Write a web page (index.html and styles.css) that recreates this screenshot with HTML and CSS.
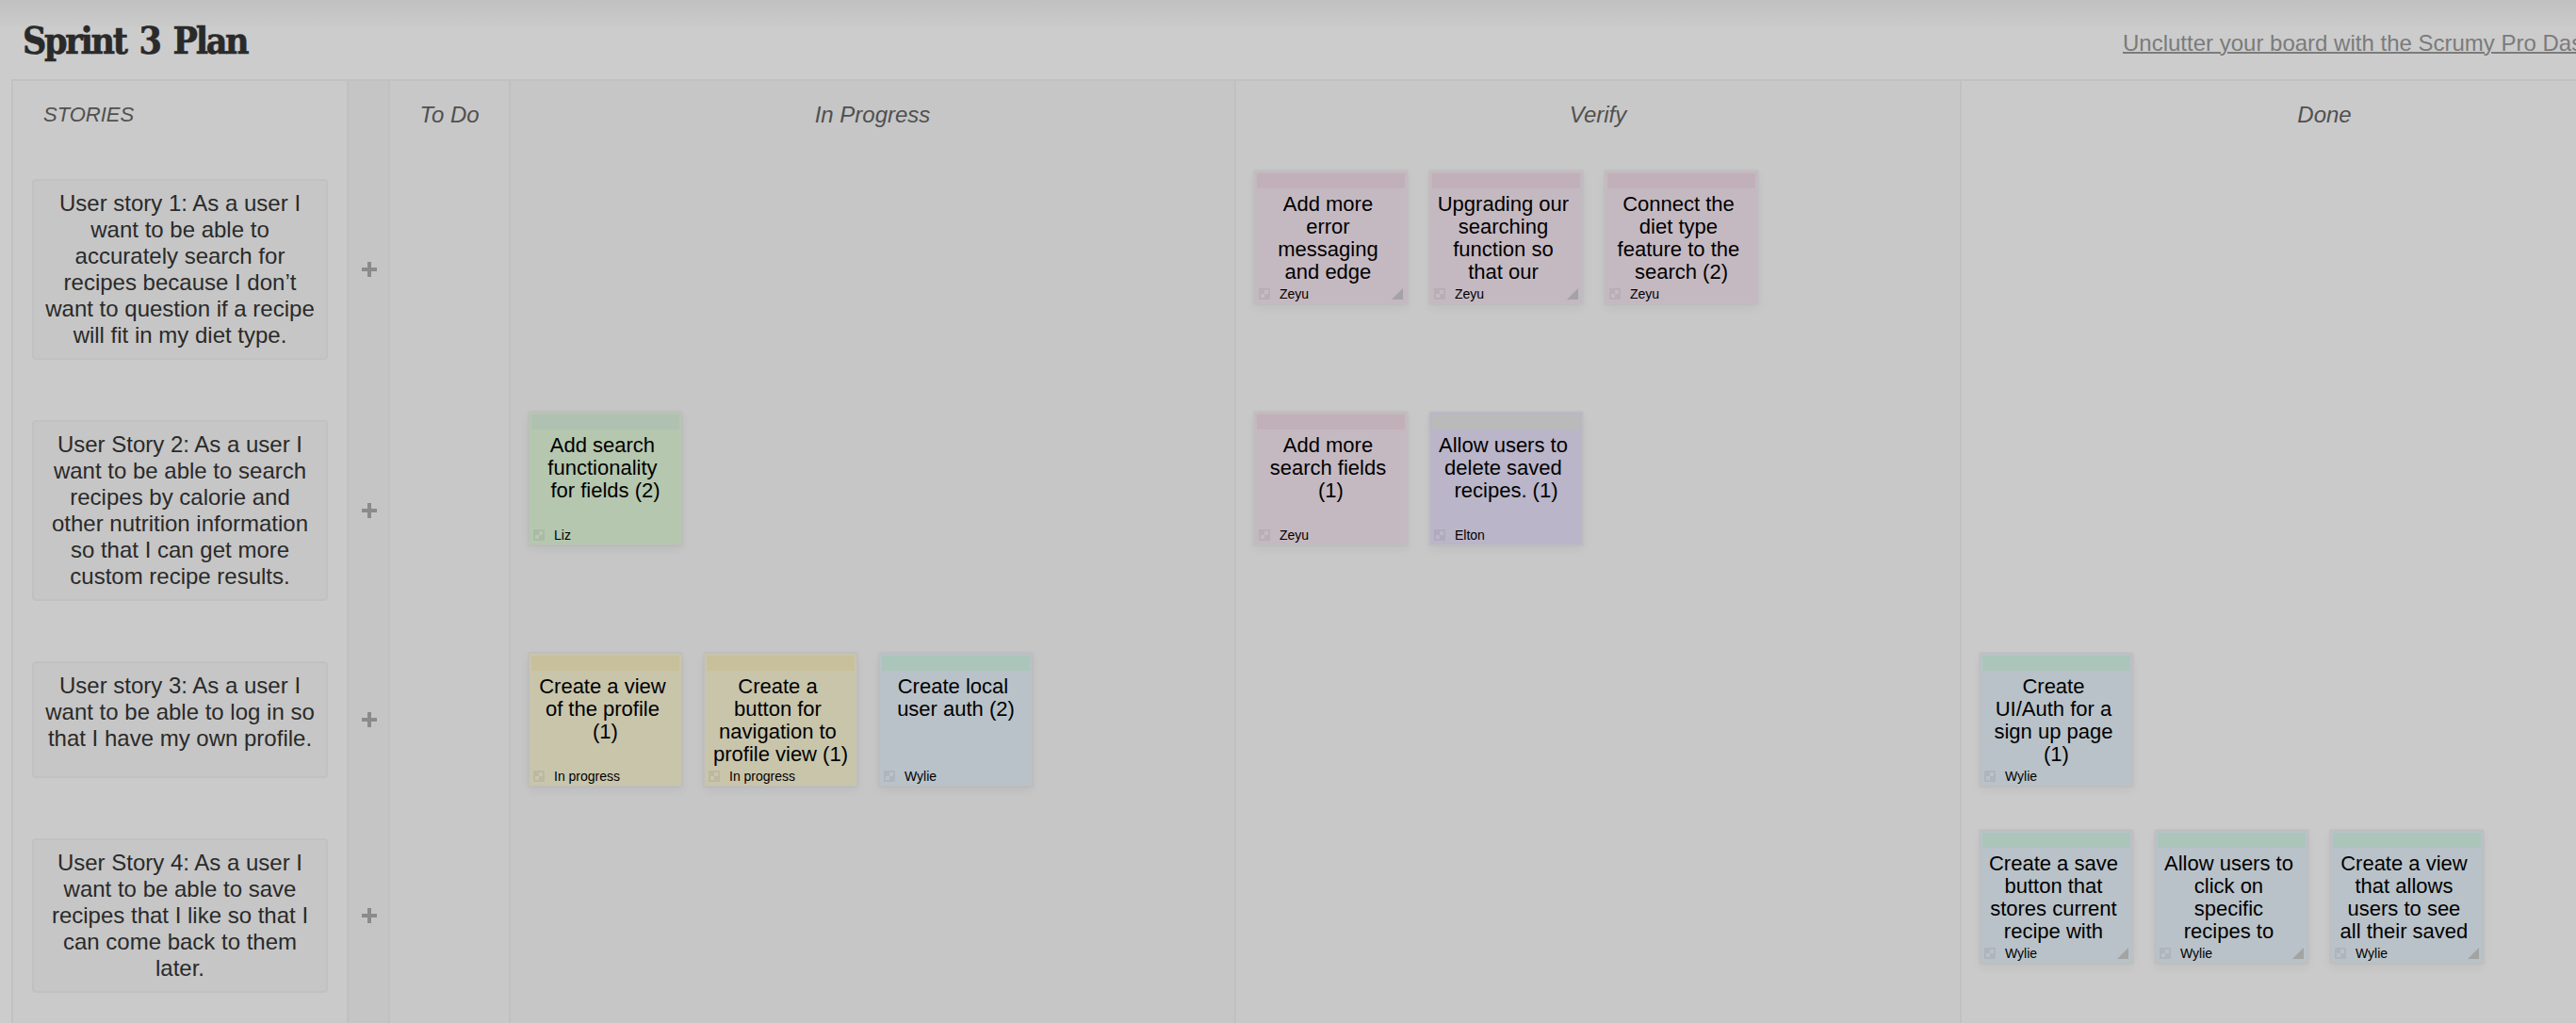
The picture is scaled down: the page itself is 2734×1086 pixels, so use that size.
FILE: index.html
```html
<!DOCTYPE html>
<html lang="en">
<head>
<meta charset="utf-8">
<title>Sprint 3 Plan</title>
<link rel="stylesheet" href="styles.css">
</head>
<body>
<svg class="defs" width="0" height="0">
  <symbol id="mark" viewBox="0 0 12 12"><path class="mark-bg" d="M0 0h12v12H0z"/><path class="mark-fg" d="M6 2h4v4H6zM2 6h4v4H2z"/></symbol>
  <symbol id="plus" viewBox="0 0 16 16"><path d="M6 0h4v6h6v4h-6v6H6v-6H0V6h6z"/></symbol>
  <symbol id="more" viewBox="0 0 12 12"><path d="M12 0v12H0z"/></symbol>
</svg>
<header class="top">
  <h1 class="title">Sprint 3 Plan</h1>
  <a class="promo">Unclutter your board with the Scrumy Pro Dashboard</a>
</header>
<main class="board">
  <section class="col stories">
    <h2 class="head">STORIES</h2>
    <div class="row tall"><p class="story">User story 1: As a user I<br>want to be able to<br>accurately search for<br>recipes because I don’t<br>want to question if a recipe<br>will fit in my diet type.</p></div>
    <div class="row tall"><p class="story">User Story 2: As a user I<br>want to be able to search<br>recipes by calorie and<br>other nutrition information<br>so that I can get more<br>custom recipe results.</p></div>
    <div class="row"><p class="story">User story 3: As a user I<br>want to be able to log in so<br>that I have my own profile.</p></div>
    <div class="row mid"><p class="story">User Story 4: As a user I<br>want to be able to save<br>recipes that I like so that I<br>can come back to them<br>later.</p></div>
  </section>
  <section class="col adders">
    <div class="head"></div>
    <div class="row tall"><svg class="plus"><use href="#plus"/></svg></div>
    <div class="row tall"><svg class="plus"><use href="#plus"/></svg></div>
    <div class="row"><svg class="plus"><use href="#plus"/></svg></div>
    <div class="row mid"><svg class="plus"><use href="#plus"/></svg></div>
  </section>
  <section class="col todo"><h2 class="head">To Do</h2></section>
  <section class="col lane">
    <h2 class="head">In Progress</h2>
    <div class="row tall"></div>
    <div class="row tall">
      <article class="card green"><div class="bar"></div><div class="text">Add search 
functionality 
for fields (2)</div><footer><svg class="mark"><use href="#mark"/></svg><span>Liz</span></footer></article>
    </div>
    <div class="row">
      <article class="card yellow"><div class="bar"></div><div class="text">Create a view 
of the profile 
(1)</div><footer><svg class="mark"><use href="#mark"/></svg><span>In progress</span></footer></article>
      <article class="card yellow"><div class="bar"></div><div class="text">Create a 
button for 
navigation to 
profile view (1)</div><footer><svg class="mark"><use href="#mark"/></svg><span>In progress</span></footer></article>
      <article class="card blue"><div class="bar"></div><div class="text">Create local 
user auth (2)</div><footer><svg class="mark"><use href="#mark"/></svg><span>Wylie</span></footer></article>
    </div>
  </section>
  <section class="col lane verify">
    <h2 class="head">Verify</h2>
    <div class="row tall">
      <article class="card pink"><div class="bar"></div><div class="text">Add more 
error 
messaging 
and edge </div><footer><svg class="mark"><use href="#mark"/></svg><span>Zeyu</span><svg class="more"><use href="#more"/></svg></footer></article>
      <article class="card pink"><div class="bar"></div><div class="text">Upgrading our 
searching 
function so 
that our </div><footer><svg class="mark"><use href="#mark"/></svg><span>Zeyu</span><svg class="more"><use href="#more"/></svg></footer></article>
      <article class="card pink"><div class="bar"></div><div class="text">Connect the 
diet type 
feature to the 
search (2)</div><footer><svg class="mark"><use href="#mark"/></svg><span>Zeyu</span></footer></article>
    </div>
    <div class="row tall">
      <article class="card pink"><div class="bar"></div><div class="text">Add more 
search fields 
(1)</div><footer><svg class="mark"><use href="#mark"/></svg><span>Zeyu</span></footer></article>
      <article class="card purple"><div class="bar"></div><div class="text">Allow users to 
delete saved 
recipes. (1)</div><footer><svg class="mark"><use href="#mark"/></svg><span>Elton</span></footer></article>
    </div>
  </section>
  <section class="col lane done">
    <h2 class="head">Done</h2>
    <div class="row tall"></div>
    <div class="row tall"></div>
    <div class="row">
      <article class="card blue"><div class="bar"></div><div class="text">Create 
UI/Auth for a 
sign up page 
(1)</div><footer><svg class="mark"><use href="#mark"/></svg><span>Wylie</span></footer></article>
    </div>
    <div class="row mid">
      <article class="card blue"><div class="bar"></div><div class="text">Create a save 
button that 
stores current 
recipe with </div><footer><svg class="mark"><use href="#mark"/></svg><span>Wylie</span><svg class="more"><use href="#more"/></svg></footer></article>
      <article class="card blue"><div class="bar"></div><div class="text">Allow users to 
click on 
specific 
recipes to </div><footer><svg class="mark"><use href="#mark"/></svg><span>Wylie</span><svg class="more"><use href="#more"/></svg></footer></article>
      <article class="card blue"><div class="bar"></div><div class="text">Create a view 
that allows 
users to see 
all their saved </div><footer><svg class="mark"><use href="#mark"/></svg><span>Wylie</span><svg class="more"><use href="#more"/></svg></footer></article>
    </div>
  </section>
</main>
</body>
</html>
```
FILE: styles.css
```css
* { box-sizing: border-box; }
html, body { height: 100%; overflow: hidden; }
body {
  margin: 0;
  background: #ccc;
  color: #2a2a2a;
  font-family: "Liberation Sans", Arial, sans-serif;
}
h1, h2, p { margin: 0; }
svg { display: block; flex: none; }
.defs { display: none; }

.top {
  height: 84px;
  display: flex;
  justify-content: space-between;
  align-items: flex-start;
  padding-left: 24px;
  background: linear-gradient(#c1c1c1, #cacaca) 0 0 / 100% 28px no-repeat;
}
.title {
  padding-top: 18px;
  font: bold 39px/50px "DejaVu Serif Condensed", "DejaVu Serif", serif;
  font-stretch: condensed;
  letter-spacing: -2.3px;
  word-spacing: 4px;
  -webkit-text-stroke: .6px #2a2a2a;
  white-space: nowrap;
}
.promo {
  width: 481px;
  padding-top: 32px;
  overflow: hidden;
  white-space: nowrap;
  font-size: 24px;
  line-height: 28px;
  color: #7b7b7b;
  text-decoration: underline;
  text-decoration-thickness: 2px;
}

.board {
  display: grid;
  grid-template-columns: 356px 44px 128px 770px 770px 772px;
  width: 2840px;
  height: 1002px;
  margin-left: 12px;
  border-top: 2px solid #c1c1c1;
}
.col { border-left: 2px solid #c1c1c1; background: #c6c6c6; }
.stories { background: #cacaca; }
.adders { background: #c5c5c5; }
.todo, .verify { background: #c8c8c8; }
.done { background: #cacaca; }
.head {
  height: 86px;
  padding-top: 22px;
  font-size: 24px;
  line-height: 28px;
  font-weight: normal;
  font-style: italic;
  text-align: center;
  color: #505050;
}
.stories .head { font-size: 22px; text-align: left; padding-left: 32px; }

.row { height: 188px; display: flex; padding-top: 9px; gap: 23px; }
.row.tall { height: 256px; }
.row.mid { height: 228px; }
.stories .row { padding: 18px 20px 0; }
.adders .row { padding: 18px 0 46px 2px; align-items: center; justify-content: center; }
.lane .row { padding-left: 19px; align-items: flex-start; }

.story {
  width: 314px;
  min-height: 124px;
  align-self: flex-start;
  padding: 10px 0;
  border: 2px solid #c1c1c1;
  border-radius: 4px;
  background: #c6c6c6;
  font-size: 24px;
  line-height: 28px;
  text-align: center;
  white-space: nowrap;
}
.plus { width: 16px; height: 16px; fill: #8b8b8b; }

.card {
  width: 163px;
  height: 142px;
  display: flex;
  flex-direction: column;
  padding: 2px;
  border: 1px solid #bebebe;
  background: var(--paper);
  box-shadow: 0 4px 10px rgba(0, 0, 0, .05), 0 0 2px rgba(0, 0, 0, .08);
  color: #000;
}
.bar { height: 16px; flex: none; background: var(--bar); }
.text {
  height: 104px;
  padding-top: 5px;
  font-size: 22px;
  line-height: 24px;
  text-align: center;
  white-space: pre;
  overflow: hidden;
}
footer {
  display: flex;
  align-items: center;
  height: 16px;
  padding: 0 2px;
  font-size: 14px;
  line-height: 16px;
}
footer span { flex: 1; padding-left: 10px; }
.mark { width: 12px; height: 12px; }
.mark-bg { fill: rgba(0, 0, 0, .06); }
.mark-fg { fill: rgba(255, 255, 255, .18); }
.more { width: 12px; height: 12px; fill: #a2a4a3; }

.pink { --paper: #c5b9c1; --bar: #c2b0b8; }
.green { --paper: #b5c7ae; --bar: #afc2b1; }
.purple { --paper: #bab5c8; --bar: #bababa; }
.yellow { --paper: #c8c5ab; --bar: #c7c09b; }
.blue { --paper: #b9c2c8; --bar: #abc5bb; }
```
